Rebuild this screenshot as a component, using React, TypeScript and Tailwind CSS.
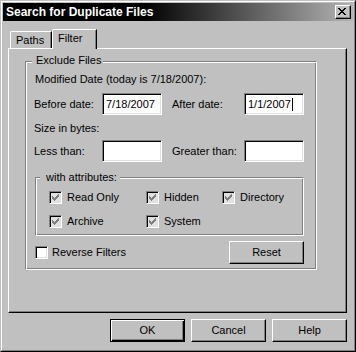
import React from "react";

function CheckGlyph({ color }: { color: string }) {
  const ys = [2, 3, 4, 3, 2, 1, 0];
  return (
    <svg width="7" height="7" viewBox="0 0 7 7" shapeRendering="crispEdges" className="block">
      {ys.map((y, i) => (
        <rect key={i} x={i} y={y} width="1" height="3" fill={color} />
      ))}
    </svg>
  );
}

function CloseGlyph() {
  const rows: number[][] = [
    [0, 1, 6, 7],
    [1, 2, 5, 6],
    [2, 3, 4, 5],
    [3, 4],
    [2, 3, 4, 5],
    [1, 2, 5, 6],
    [0, 1, 6, 7],
  ];
  return (
    <svg width="8" height="7" viewBox="0 0 8 7" shapeRendering="crispEdges" className="block">
      {rows.map((cols, y) =>
        cols.map((x) => <rect key={`${x}-${y}`} x={x} y={y} width="1" height="1" fill="#000" />)
      )}
    </svg>
  );
}

function Checkbox({ checked, disabled }: { checked?: boolean; disabled?: boolean }) {
  return (
    <div
      className={`w-[13px] h-[13px] shrink-0 border border-t-[#808080] border-l-[#808080] border-r-white border-b-white shadow-[inset_1px_1px_0_#000,inset_-1px_-1px_0_#dfdfdf] p-[2px] ${
        disabled ? "bg-[#e0e0e0]" : "bg-white"
      }`}
    >
      {checked && <CheckGlyph color={disabled ? "#808080" : "#000"} />}
    </div>
  );
}

function TextBox({ value, caret }: { value?: string; caret?: boolean }) {
  return (
    <div className="w-[60px] h-[22px] shrink-0 bg-white border border-t-[#808080] border-l-[#808080] border-r-white border-b-white shadow-[inset_1px_1px_0_#000,inset_-1px_-1px_0_#dfdfdf] flex items-center pl-[3px]">
      {value && <span className="whitespace-nowrap">{value}</span>}
      {caret && <span className="w-px h-[13px] bg-black ml-px" />}
    </div>
  );
}

function Button({ label, isDefault }: { label: string; isDefault?: boolean }) {
  return (
    <div
      className={`w-[75px] h-[23px] shrink-0 flex items-center justify-center border ${
        isDefault
          ? "border-black shadow-[inset_1px_1px_0_#fff,inset_-1px_-1px_0_#000,inset_-2px_-2px_0_#808080]"
          : "border-t-white border-l-white border-r-black border-b-black shadow-[inset_-1px_-1px_0_#808080]"
      }`}
    >
      {label}
    </div>
  );
}

function AttrItem({ label, width }: { label: string; width?: string }) {
  return (
    <div className={`flex items-center gap-[5px] h-[13px] ${width ?? ""}`}>
      <Checkbox checked disabled />
      <span className="whitespace-nowrap">{label}</span>
    </div>
  );
}

export default function App() {
  return (
    <div className="w-[356px] h-[352px] bg-[#c0c0c0] border border-t-[#c0c0c0] border-l-[#c0c0c0] border-r-black border-b-black font-['Liberation_Sans',Arial,sans-serif] text-[11px] leading-[13px] text-black select-none">
      <div className="h-full border border-t-white border-l-white border-r-[#808080] border-b-[#808080] p-px flex flex-col">
        {/* Title bar */}
        <div className="h-[18px] shrink-0 flex items-center justify-between pl-[3px] pr-[2px] bg-[linear-gradient(90deg,#000_40%,#b4b4b4)]">
          <span className="text-white font-bold text-[12px] leading-[14px] whitespace-nowrap">
            Search for Duplicate Files
          </span>
          <div className="w-[16px] h-[14px] bg-[#c0c0c0] border border-t-white border-l-white border-r-black border-b-black shadow-[inset_-1px_-1px_0_#808080] pl-[2px] pt-[2px]">
            <CloseGlyph />
          </div>
        </div>

        {/* Body */}
        <div className="flex flex-col pl-[5px] pr-[6px]">
          {/* Tabs */}
          <div className="mt-[8px] h-[19px] flex items-end pl-[2px]">
            <div className="w-[42px] h-[17px] border-l border-t border-l-white border-t-white border-r border-r-black shadow-[inset_-1px_0_0_#808080] pl-[5px] pt-[2px] rounded-tl-[2px]">
              Paths
            </div>
            <div className="relative z-10 w-[45px] h-[20px] -mb-px bg-[#c0c0c0] border-l border-t border-l-white border-t-white border-r border-r-black shadow-[inset_-1px_0_0_#808080] pl-[5px] pt-[2px] rounded-tl-[2px]">
              Filter
            </div>
          </div>

          {/* Panel */}
          <div className="h-[265px] border border-t-white border-l-white border-r-black border-b-black shadow-[inset_-1px_-1px_0_#808080] pl-[16px] pt-[12px]">
            {/* Exclude Files group */}
            <div className="relative w-[292px] h-[209px] border border-t-[#808080] border-l-[#808080] border-r-white border-b-white shadow-[inset_1px_1px_0_#fff,inset_-1px_-1px_0_#808080] pl-[8px] pr-[12px] pt-[11px] flex flex-col">
              <span className="absolute left-[6px] top-[-8px] bg-[#c0c0c0] pl-[4px] pr-[2px] whitespace-nowrap">
                Exclude Files
              </span>

              <div className="h-[13px] ml-px whitespace-nowrap">Modified Date (today is 7/18/2007):</div>

              <div className="mt-[7px] h-[22px] flex items-center">
                <span className="w-[68px] shrink-0 whitespace-nowrap">Before date:</span>
                <TextBox value="7/18/2007" />
                <span className="ml-[10px] w-[72px] shrink-0 whitespace-nowrap">After date:</span>
                <TextBox value="1/1/2007" caret />
              </div>

              <div className="mt-[7px] h-[13px] whitespace-nowrap">Size in bytes:</div>

              <div className="mt-[5px] h-[22px] flex items-center">
                <span className="w-[68px] shrink-0 whitespace-nowrap">Less than:</span>
                <TextBox />
                <span className="ml-[10px] w-[72px] shrink-0 whitespace-nowrap">Greater than:</span>
                <TextBox />
              </div>

              {/* with attributes group */}
              <div className="relative mt-[15px] ml-px w-[269px] h-[59px] shrink-0 border border-t-[#808080] border-l-[#808080] border-r-white border-b-white shadow-[inset_1px_1px_0_#fff,inset_-1px_-1px_0_#808080] pl-[13px] pt-[13px] flex flex-col gap-[11px]">
                <span className="absolute left-[4px] top-[-7px] bg-[#c0c0c0] pl-[6px] pr-[3px] whitespace-nowrap">
                  with attributes:
                </span>
                <div className="flex">
                  <AttrItem label="Read Only" width="w-[97px]" />
                  <AttrItem label="Hidden" width="w-[76px]" />
                  <AttrItem label="Directory" />
                </div>
                <div className="flex">
                  <AttrItem label="Archive" width="w-[97px]" />
                  <AttrItem label="System" width="w-[76px]" />
                </div>
              </div>

              <div className="mt-[5px] h-[23px] flex items-center justify-between">
                <div className="ml-px flex items-center gap-[4px]">
                  <Checkbox />
                  <span className="whitespace-nowrap">Reverse Filters</span>
                </div>
                <Button label="Reset" />
              </div>
            </div>
          </div>

          {/* Dialog buttons */}
          <div className="mt-[6px] flex justify-end gap-[6px]">
            <Button label="OK" isDefault />
            <Button label="Cancel" />
            <Button label="Help" />
          </div>
        </div>
      </div>
    </div>
  );
}
